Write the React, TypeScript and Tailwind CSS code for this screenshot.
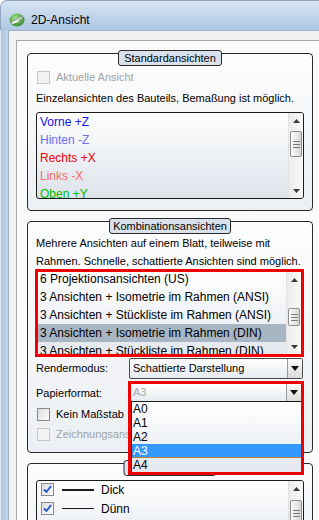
import React from "react";

function Scrollbar({ thumb }: { thumb: string }) {
  return (
    <div className="w-[15px] shrink-0 flex flex-col bg-gradient-to-r from-[#ececec] to-[#f9f9f9] border-l border-[#e2e2e2]">
      <div className="h-[15px] shrink-0 flex items-center justify-center">
        <svg width="7" height="4" viewBox="0 0 7 4">
          <path d="M3.5 0L7 4H0z" fill="#3a3a3a" />
        </svg>
      </div>
      <div
        className={
          "shrink-0 mx-[1px] rounded-[2px] border border-[#8e8e8e] bg-gradient-to-r from-[#fdfdfd] to-[#d6d6d6] flex flex-col items-center justify-center gap-[2px] " +
          thumb
        }
      >
        <div className="w-[7px] h-px bg-[#7a7a7a]" />
        <div className="w-[7px] h-px bg-[#7a7a7a]" />
        <div className="w-[7px] h-px bg-[#7a7a7a]" />
      </div>
      <div className="flex-1" />
      <div className="h-[15px] shrink-0 flex items-center justify-center">
        <svg width="7" height="4" viewBox="0 0 7 4">
          <path d="M0 0H7L3.5 4z" fill="#3a3a3a" />
        </svg>
      </div>
    </div>
  );
}

function GroupBox({
  title,
  tabClass,
  className,
  children,
}: {
  title: string;
  tabClass: string;
  className: string;
  children: React.ReactNode;
}) {
  return (
    <div
      className={
        "relative shrink-0 border border-[#2a2a2a] rounded-[4px] bg-gradient-to-b from-[#fdfdfd] to-[#eceff3] px-[8px] " +
        className
      }
    >
      <div
        className={
          "absolute left-1/2 -translate-x-1/2 top-[-4px] h-[16px] flex items-center justify-center rounded-[3px] border border-[#2a2a2a] bg-[#d9e2ec] text-[11px] text-black whitespace-nowrap " +
          tabClass
        }
      >
        {title}
      </div>
      {children}
    </div>
  );
}

function CheckBox({ disabled, checked }: { disabled?: boolean; checked?: boolean }) {
  return (
    <div
      className={
        "w-[13px] h-[13px] shrink-0 border flex items-center justify-center " +
        (disabled
          ? "border-[#c6c6c6] bg-[#f3f3f3]"
          : "border-[#8a8a8a] bg-gradient-to-br from-[#dcdcdc] to-[#fbfbfb]")
      }
    >
      {checked && (
        <svg width="9" height="9" viewBox="0 0 9 9">
          <path d="M1 4.5L3.5 7L8 1" stroke="#2150c8" strokeWidth="1.8" fill="none" />
        </svg>
      )}
    </div>
  );
}

function DropArrow() {
  return (
    <div className="w-[15px] h-full shrink-0 flex items-center justify-center border-l border-[#9a9a9a] bg-gradient-to-b from-[#fbfbfb] to-[#dcdcdc]">
      <svg width="8" height="5" viewBox="0 0 8 5">
        <path d="M0 0H8L4 5z" fill="#111" />
      </svg>
    </div>
  );
}

const single = [
  { t: "Vorne +Z", c: "text-[#1010ee]" },
  { t: "Hinten -Z", c: "text-[#6e6ef0]" },
  { t: "Rechts +X", c: "text-[#f00000]" },
  { t: "Links -X", c: "text-[#f46a6a]" },
  { t: "Oben +Y", c: "text-[#00bb00]" },
];

const combos = [
  "6 Projektionsansichten (US)",
  "3 Ansichten + Isometrie im Rahmen (ANSI)",
  "3 Ansichten + Stückliste im Rahmen (ANSI)",
  "3 Ansichten + Isometrie im Rahmen (DIN)",
  "3 Ansichten + Stückliste im Rahmen (DIN)",
];

const formats = ["A0", "A1", "A2", "A3", "A4"];

export default function App() {
  return (
    <div className="w-[319px] h-[520px] overflow-hidden bg-white font-['Liberation_Sans',Arial,sans-serif] flex flex-col">
      {/* title bar */}
      <div className="h-[30px] shrink-0 flex items-center pt-[8px] pl-[8px] gap-[6px] rounded-tl-[7px] border-t border-l border-[#8ea6c0] bg-gradient-to-b from-[#d7e4f2] to-[#aec7e3]">
        <svg width="16" height="14" viewBox="0 0 16 14">
          <defs>
            <radialGradient id="g" cx="0.4" cy="0.35" r="0.7">
              <stop offset="0" stopColor="#9fe08a" />
              <stop offset="1" stopColor="#2e8a2a" />
            </radialGradient>
          </defs>
          <ellipse cx="8" cy="7" rx="7.5" ry="6.5" fill="url(#g)" />
          <path d="M2 9L13 3.5L14 5L3.5 11z" fill="#e9e9e9" stroke="#7a7a7a" strokeWidth="0.6" />
          <path d="M3 10.5L10 8" stroke="#ffffff" strokeWidth="1.2" />
        </svg>
        <span className="text-[12px] text-black">2D-Ansicht</span>
      </div>

      <div className="flex flex-1 min-h-0">
        <div className="w-[8px] shrink-0 border-l border-[#dbe6f2] bg-gradient-to-r from-[#aec4df] to-[#c3d4e8]" />
        <div className="flex-1 flex flex-col bg-[#f1f1f1] border-l border-t border-[#9cb1c9] pt-[9px] pl-[7px]">
          <div className="flex-1 flex flex-col border-l border-t border-[#a8a8a8] bg-[#fafafa] pt-[12px] pl-[10px] pr-[6px]">
            {/* Standardansichten */}
            <GroupBox title="Standardansichten" tabClass="w-[104px]" className="h-[158px]">
              <div className="mt-[17px] h-[13px] flex items-center gap-[6px] pl-[1px]">
                <CheckBox disabled />
                <span className="text-[11px] text-[#a2a2a2]">Aktuelle Ansicht</span>
              </div>
              <div className="mt-[7px] h-[14px] flex items-center text-[11px] text-black whitespace-nowrap">
                Einzelansichten des Bauteils, Bemaßung ist möglich.
              </div>
              <div className="mt-[7px] h-[87px] flex border border-[#1c1c1c] rounded-[3px] bg-gradient-to-b from-white to-[#dde3ea] overflow-hidden">
                <div className="flex-1 flex flex-col pl-[3px]">
                  {single.map((s) => (
                    <div key={s.t} className={"h-[18px] shrink-0 flex items-center text-[12px] " + s.c}>
                      {s.t}
                    </div>
                  ))}
                </div>
                <Scrollbar thumb="mt-[3px] h-[26px]" />
              </div>
            </GroupBox>

            {/* Kombinationsansichten */}
            <GroupBox title="Kombinationsansichten" tabClass="w-[122px]" className="mt-[10px] h-[232px]">
              <div className="mt-[12px] h-[35px] text-[11px] leading-[18px] text-black whitespace-nowrap">
                <div>Mehrere Ansichten auf einem Blatt, teilweise mit</div>
                <div>Rahmen. Schnelle, schattierte Ansichten sind möglich.</div>
              </div>
              <div className="h-[88px] -ml-[1px] flex border-[3px] border-[#f00000] bg-gradient-to-b from-white to-[#e3e8ee] overflow-hidden">
                <div className="flex-1 flex flex-col -mt-[2px]">
                  {combos.map((c, i) => (
                    <div
                      key={c}
                      className={
                        "h-[18px] shrink-0 flex items-center pl-[2px] text-[12px] text-black whitespace-nowrap " +
                        (i === 3 ? "bg-[#a8b5c3]" : "")
                      }
                    >
                      {c}
                    </div>
                  ))}
                </div>
                <Scrollbar thumb="mt-[21px] h-[18px]" />
              </div>

              <div className="mt-[1px] h-[21px] flex items-center">
                <span className="w-[93px] text-[11px] text-black">Rendermodus:</span>
                <div className="w-[174px] h-[21px] flex items-center border border-[#4a4a4a] rounded-[2px] bg-gradient-to-b from-white to-[#e6eaef]">
                  <span className="flex-1 pl-[3px] text-[11px] text-black">Schattierte Darstellung</span>
                  <DropArrow />
                </div>
              </div>

              <div className="mt-[3px] h-[22px] flex items-center">
                <span className="w-[93px] text-[11px] text-black">Papierformat:</span>
                <div className="relative w-[174px] h-[22px]">
                  <div className="absolute z-10 top-[-1px] left-[-1px] w-[176px] flex flex-col border-[3px] border-[#f00000] bg-white">
                    <div className="h-[17px] flex items-center bg-gradient-to-b from-white to-[#e6eaef]">
                      <span className="flex-1 pl-[2px] text-[11px] text-[#a8a8a8]">A3</span>
                      <DropArrow />
                    </div>
                    <div className="flex flex-col border-t border-l border-[#1c1c1c] bg-gradient-to-b from-white to-[#e3e8ee]">
                      {formats.map((f) => (
                        <div
                          key={f}
                          className={
                            "h-[14px] flex items-center pl-[1px] text-[12px] " +
                            (f === "A3"
                              ? "bg-[#3399ff] text-white border-b border-dotted border-[#c08040]"
                              : "text-black")
                          }
                        >
                          {f}
                        </div>
                      ))}
                    </div>
                  </div>
                </div>
              </div>

              <div className="mt-[4px] h-[13px] flex items-center gap-[6px] pl-[1px]">
                <CheckBox />
                <span className="text-[11px] text-black">Kein Maßstab</span>
              </div>
              <div className="mt-[7px] h-[13px] flex items-center gap-[6px] pl-[1px] overflow-hidden">
                <CheckBox disabled />
                <span className="text-[11px] text-[#a2a2a2] whitespace-nowrap">Zeichnungsansi</span>
              </div>
            </GroupBox>

            {/* Linien (Titel vom Dropdown verdeckt) */}
            <GroupBox title="" tabClass="w-[93px]" className="mt-[10px] h-[90px]">
              <div className="mt-[16px] h-[70px] flex border border-[#1c1c1c] rounded-[3px] bg-gradient-to-b from-white to-[#e3e8ee] overflow-hidden">
                <div className="flex-1 flex flex-col -mt-[1px] pl-[4px]">
                  <div className="h-[19px] shrink-0 flex items-center">
                    <CheckBox checked />
                    <div className="ml-[8px] w-[32px] h-[2px] bg-[#1a1a1a]" />
                    <span className="ml-[7px] text-[12px] text-black">Dick</span>
                  </div>
                  <div className="h-[19px] shrink-0 flex items-center">
                    <CheckBox checked />
                    <div className="ml-[8px] w-[32px] h-px bg-[#1a1a1a]" />
                    <span className="ml-[7px] text-[12px] text-black">Dünn</span>
                  </div>
                  <div className="h-[19px] shrink-0 flex items-center">
                    <CheckBox checked />
                  </div>
                </div>
                <Scrollbar thumb="mt-[4px] h-[26px]" />
              </div>
            </GroupBox>
          </div>
        </div>
      </div>
    </div>
  );
}
